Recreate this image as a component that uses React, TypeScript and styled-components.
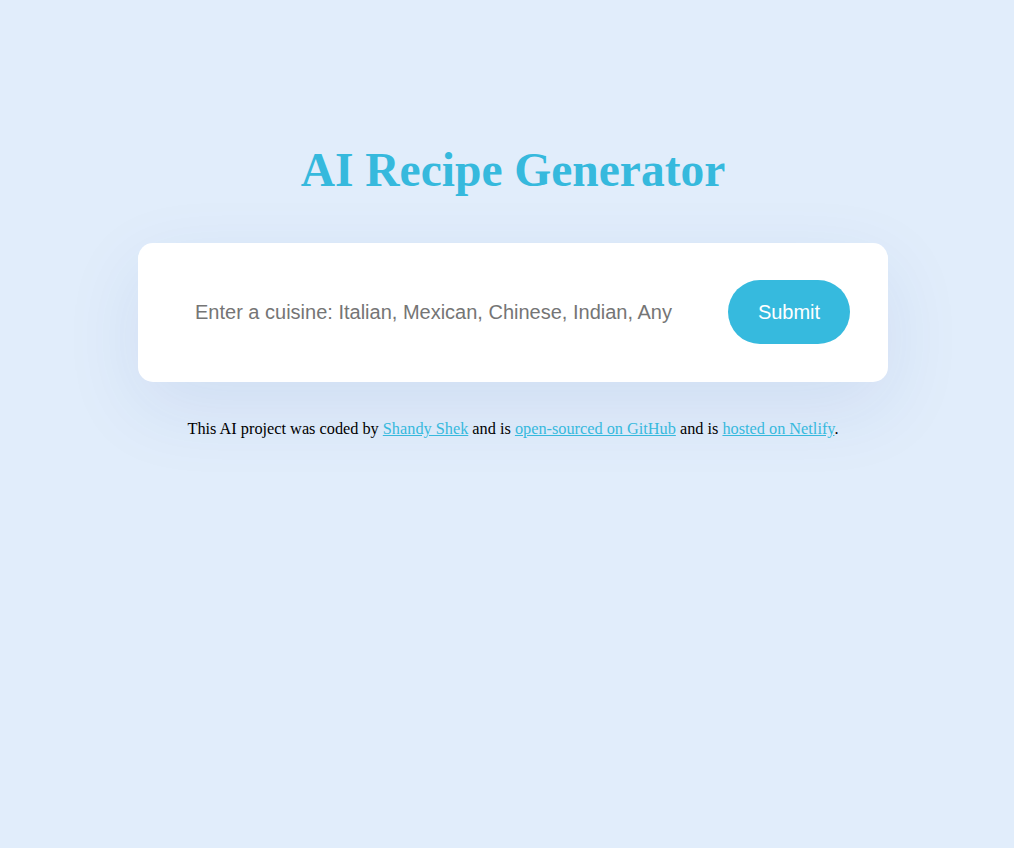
import React from "react";
import styled, { createGlobalStyle } from "styled-components";

const GlobalStyle = createGlobalStyle`
  html, body {
    margin: 0;
    padding: 0;
    background: #e1edfb;
    min-height: 100%;
  }
  body {
    font-family: "Liberation Serif", "Times New Roman", serif;
  }
`;

const Page = styled.main`
  min-height: 848px;
  box-sizing: border-box;
  padding: 144px 0 0 12px;
`;

const Container = styled.div`
  width: 750px;
  margin: 0 auto;
`;

const Title = styled.h1`
  margin: 0 0 46px;
  font-family: "Liberation Serif", "Times New Roman", serif;
  font-size: 47.5px;
  font-weight: 700;
  line-height: 53px;
  color: #36b9dd;
  text-align: center;
`;

const Card = styled.form`
  display: flex;
  align-items: center;
  gap: 20px;
  background: #ffffff;
  border-radius: 15px;
  padding: 37px 38px 38px;
  box-shadow: 0 25px 80px rgba(30, 70, 150, 0.09);
`;

const Input = styled.input`
  flex: 1;
  min-width: 0;
  height: 64px;
  border: none;
  outline: none;
  background: transparent;
  padding: 0 0 0 19px;
  font-family: "Liberation Sans", Arial, sans-serif;
  font-size: 20px;
  color: #333;
  &::placeholder {
    color: #757575;
  }
`;

const Button = styled.button`
  flex: none;
  width: 122px;
  height: 64px;
  border: none;
  border-radius: 32px;
  background: #36bade;
  color: #ffffff;
  font-family: "Liberation Sans", Arial, sans-serif;
  font-size: 20px;
  cursor: pointer;
`;

const Footer = styled.footer`
  margin-top: 38px;
  text-align: center;
  font-family: "Liberation Serif", "Times New Roman", serif;
  font-size: 16.3px;
  line-height: 18px;
  color: #000;
`;

const Link = styled.a`
  color: #36b9dd;
  text-decoration: underline;
`;

export default function App() {
  return (
    <>
      <GlobalStyle />
      <Page>
        <Container>
          <Title>AI Recipe Generator</Title>
          <Card onSubmit={(e) => e.preventDefault()}>
            <Input
              type="search"
              placeholder="Enter a cuisine: Italian, Mexican, Chinese, Indian, Any"
            />
            <Button type="submit">Submit</Button>
          </Card>
          <Footer>
            This AI project was coded by <Link href="#">Shandy Shek</Link> and
            is <Link href="#">open-sourced on GitHub</Link> and is{" "}
            <Link href="#">hosted on Netlify</Link>.
          </Footer>
        </Container>
      </Page>
    </>
  );
}
